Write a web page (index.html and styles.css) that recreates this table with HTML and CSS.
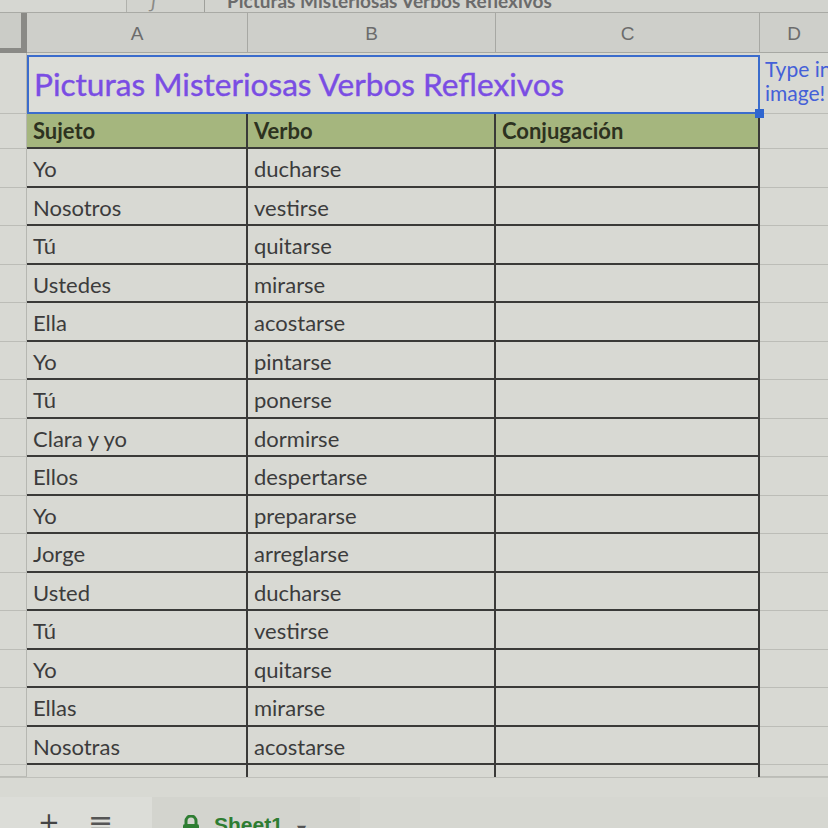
FILE: index.html
```html
<!DOCTYPE html>
<html lang="es">
<head>
<meta charset="utf-8">
<title>Picturas Misteriosas Verbos Reflexivos</title>
<link rel="stylesheet" href="styles.css">
</head>
<body>
<div class="screen">
  <div class="formula-bar">
    <div class="name-box"></div>
    <div class="fx"><span>ƒ</span></div>
    <div class="formula-text"><span>Picturas Misteriosas Verbos Reflexivos</span></div>
  </div>

  <div class="sheet">
    <div class="corner"></div>
    <div class="col-head">A</div>
    <div class="col-head">B</div>
    <div class="col-head">C</div>
    <div class="col-head col-d">D</div>

    <div class="row-head"></div>
    <div class="title-cell">Picturas Misteriosas Verbos Reflexivos<span class="handle"></span></div>
    <div class="d-note">Type in<br>image!</div>

    <div class="row-head"></div>
    <div class="hcell">Sujeto</div>
    <div class="hcell">Verbo</div>
    <div class="hcell">Conjugación</div>
    <div class="dcell"></div>

    <div class="row-head"></div><div class="cell">Yo</div><div class="cell">ducharse</div><div class="cell"></div><div class="dcell"></div>
    <div class="row-head"></div><div class="cell">Nosotros</div><div class="cell">vestirse</div><div class="cell"></div><div class="dcell"></div>
    <div class="row-head"></div><div class="cell">Tú</div><div class="cell">quitarse</div><div class="cell"></div><div class="dcell"></div>
    <div class="row-head"></div><div class="cell">Ustedes</div><div class="cell">mirarse</div><div class="cell"></div><div class="dcell"></div>
    <div class="row-head"></div><div class="cell">Ella</div><div class="cell">acostarse</div><div class="cell"></div><div class="dcell"></div>
    <div class="row-head"></div><div class="cell">Yo</div><div class="cell">pintarse</div><div class="cell"></div><div class="dcell"></div>
    <div class="row-head"></div><div class="cell">Tú</div><div class="cell">ponerse</div><div class="cell"></div><div class="dcell"></div>
    <div class="row-head"></div><div class="cell">Clara y yo</div><div class="cell">dormirse</div><div class="cell"></div><div class="dcell"></div>
    <div class="row-head"></div><div class="cell">Ellos</div><div class="cell">despertarse</div><div class="cell"></div><div class="dcell"></div>
    <div class="row-head"></div><div class="cell">Yo</div><div class="cell">prepararse</div><div class="cell"></div><div class="dcell"></div>
    <div class="row-head"></div><div class="cell">Jorge</div><div class="cell">arreglarse</div><div class="cell"></div><div class="dcell"></div>
    <div class="row-head"></div><div class="cell">Usted</div><div class="cell">ducharse</div><div class="cell"></div><div class="dcell"></div>
    <div class="row-head"></div><div class="cell">Tú</div><div class="cell">vestirse</div><div class="cell"></div><div class="dcell"></div>
    <div class="row-head"></div><div class="cell">Yo</div><div class="cell">quitarse</div><div class="cell"></div><div class="dcell"></div>
    <div class="row-head"></div><div class="cell">Ellas</div><div class="cell">mirarse</div><div class="cell"></div><div class="dcell"></div>
    <div class="row-head"></div><div class="cell">Nosotras</div><div class="cell">acostarse</div><div class="cell"></div><div class="dcell"></div>

    <div class="row-head"></div><div class="pcell"></div><div class="pcell"></div><div class="pcell"></div><div class="dcell"></div>
    <div class="gap-row"></div>
  </div>

  <div class="tab-bar">
    <div class="tab-controls">
      <span class="add">+</span>
      <span class="menu">≡</span>
    </div>
    <div class="tab">
      <svg class="lock" width="18" height="20" viewBox="0 0 18 20"><path d="M4 9V6a5 5 0 0 1 10 0v3" fill="none" stroke="#2e7d32" stroke-width="3"/><rect x="1" y="9" width="16" height="11" rx="2" fill="#2e7d32"/></svg>
      <span class="tab-name">Sheet1</span>
      <span class="caret">▾</span>
    </div>
    <div class="tab-rest"></div>
  </div>
</div>
</body>
</html>
```

FILE: styles.css
```css
* { box-sizing: border-box; }
html, body { margin: 0; padding: 0; }
body {
  width: 828px;
  height: 828px;
  overflow: hidden;
  background: #d8d9d3;
  font-family: Lato, "Open Sans", sans-serif;
  color: #3c3c3c;
}
.screen { width: 828px; height: 828px; display: flex; flex-direction: column; }

.formula-bar {
  height: 13px;
  display: flex;
  background: #d2d3ce;
  border-bottom: 1px solid #a9aaa5;
  overflow: hidden;
}
.name-box { width: 127px; border-right: 1px solid #b0b1ac; background: #d6d7d2; }
.fx { width: 78px; border-right: 1px solid #9fa09b; overflow: hidden; }
.fx span { display: block; margin: -12px 0 0 24px; font-size: 20px; color: #8a8a86; font-style: italic; }
.formula-text { flex: 1; overflow: hidden; }
.formula-text span {
  display: block;
  margin: -11px 0 0 22px;
  font-size: 19px;
  font-weight: 700;
  color: #6b6b6b;
  white-space: nowrap;
}

.sheet {
  display: grid;
  grid-template-columns: 27px 221px 248px 264px 68px;
  grid-template-rows: 40px 61px 35px repeat(16, 38.5px) 12px 20px;
}

.corner {
  background: #cbccc7;
  border-right: 6px solid #8a8a86;
  border-bottom: 5px solid #8a8a86;
}
.col-head {
  background: #cecfca;
  border-right: 1px solid #a7a8a3;
  border-bottom: 1px solid #a7a8a3;
  display: flex;
  align-items: center;
  justify-content: center;
  font-family: "Liberation Sans", Arial, sans-serif;
  font-size: 19px;
  color: #6c6c6c;
  padding-top: 2px;
}
.col-d { border-right: none; }

.row-head {
  border-right: 1px solid #b6b7b1;
  border-bottom: 1px solid #bcbdb7;
}

.title-cell {
  grid-column: 2 / span 3;
  position: relative;
  margin-top: 2px;
  border: 2px solid #3b6ccc;
  background: #dcddd8;
  color: #7a4de3;
  font-size: 31.6px;
  line-height: 1;
  padding: 12px 0 0 5px;
  white-space: nowrap;
  -webkit-text-stroke: 0.4px #7a4de3;
}
.handle {
  position: absolute;
  right: -6px;
  bottom: -6px;
  width: 9px;
  height: 9px;
  background: #2f66d0;
}
.d-note {
  padding: 4px 0 0 5px;
  border-bottom: 1px solid #bcbdb7;
  font-size: 21px;
  line-height: 24px;
  color: #4460d8;
  white-space: nowrap;
  overflow: hidden;
}

.hcell {
  background: #a5b67e;
  border-right: 2px solid #3a3a38;
  border-bottom: 2px solid #3a3a38;
  font-size: 22px;
  font-weight: 700;
  color: #2d321f;
  padding: 3px 0 0 6px;
  white-space: nowrap;
}
.cell {
  border-right: 2px solid #3a3a38;
  border-bottom: 2px solid #3a3a38;
  font-size: 22px;
  color: #3c3c3c;
  padding: 6px 0 0 6px;
  white-space: nowrap;
}
.pcell { border-right: 2px solid #3a3a38; }
.dcell { border-bottom: 1px solid #bcbdb7; }
.gap-row {
  grid-column: 1 / -1;
  border-top: 1px solid #bfc0ba;
}

.tab-bar {
  flex: 1;
  display: flex;
  background: #d3d4ce;
  overflow: hidden;
}
.tab-controls {
  width: 152px;
  background: #dcddd8;
  position: relative;
}
.add {
  position: absolute;
  left: 38px;
  top: 10px;
  font-size: 26px;
  color: #444;
  font-family: "DejaVu Sans", sans-serif;
}
.menu {
  position: absolute;
  left: 88px;
  top: 8px;
  font-size: 30px;
  color: #555;
  font-family: "DejaVu Sans", sans-serif;
}
.tab {
  width: 208px;
  display: flex;
  align-items: flex-start;
  padding: 18px 0 0 30px;
  gap: 14px;
}
.lock { flex: none; }
.tab-name {
  font-family: "Liberation Sans", Arial, sans-serif;
  font-size: 21px;
  font-weight: 700;
  color: #2e7d32;
  margin-top: -2px;
}
.caret { font-size: 18px; color: #555; margin-top: 2px; }
.tab-rest { flex: 1; background: #d6d7d1; }
```
